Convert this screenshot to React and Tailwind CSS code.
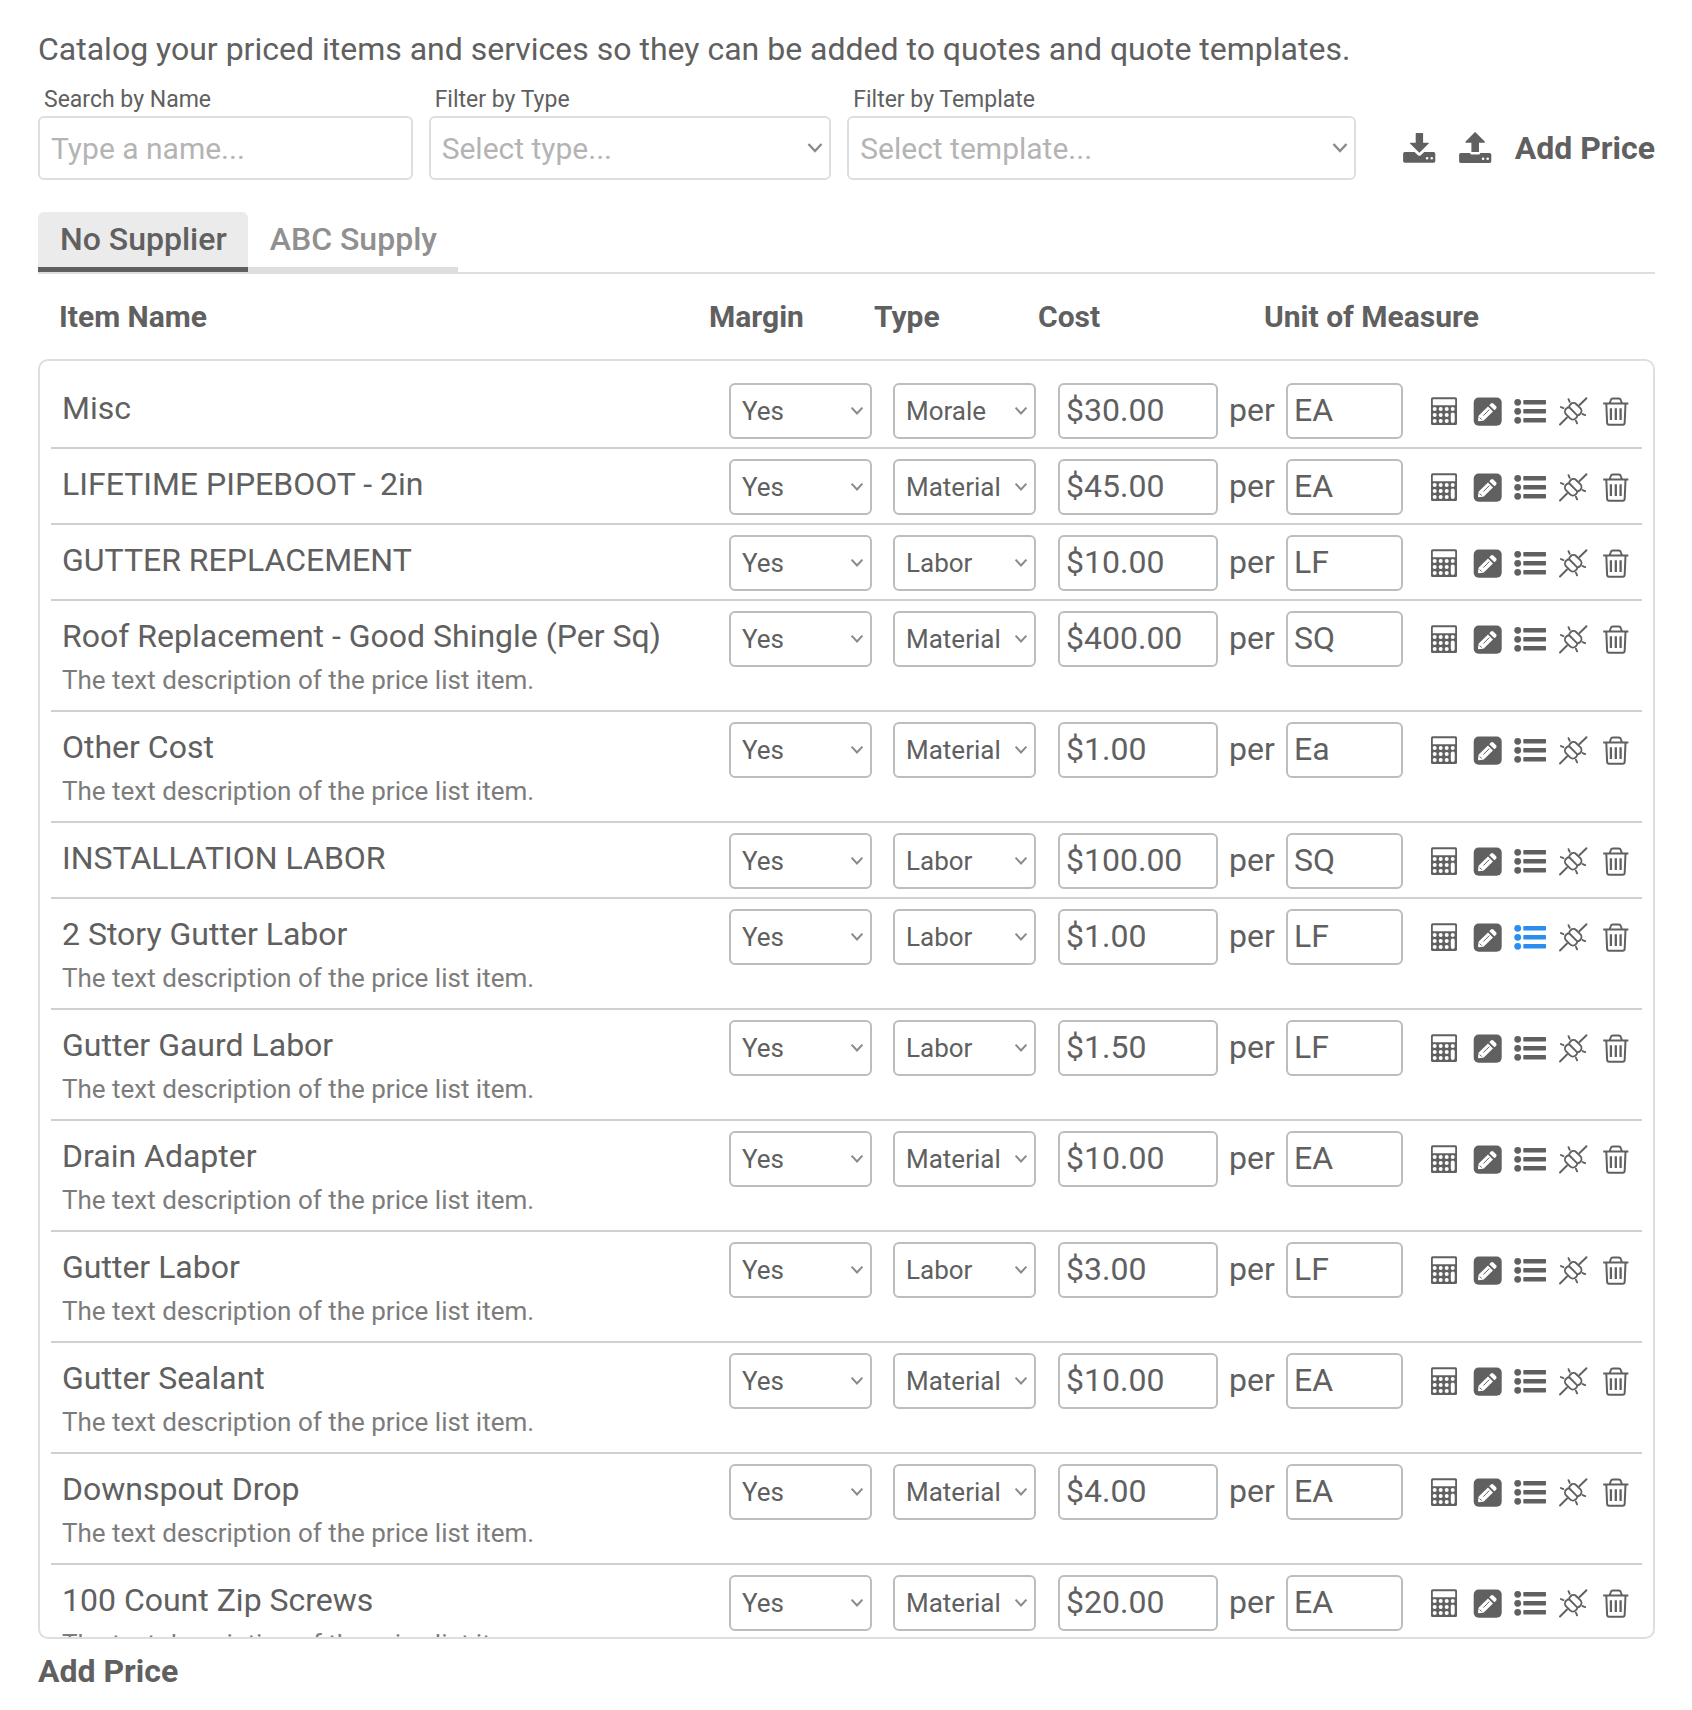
import { useState } from 'react'

const DESC = 'The text description of the price list item.'
const TYPES = ['Material', 'Labor', 'Morale']
const SUPPLIERS = ['No Supplier', 'ABC Supply']

const ITEMS = [
  { id: 1, name: 'Misc', type: 'Morale', cost: '$30.00', unit: 'EA' },
  { id: 2, name: 'LIFETIME PIPEBOOT - 2in', type: 'Material', cost: '$45.00', unit: 'EA' },
  { id: 3, name: 'GUTTER REPLACEMENT', type: 'Labor', cost: '$10.00', unit: 'LF' },
  { id: 4, name: 'Roof Replacement - Good Shingle (Per Sq)', desc: DESC, type: 'Material', cost: '$400.00', unit: 'SQ' },
  { id: 5, name: 'Other Cost', desc: DESC, type: 'Material', cost: '$1.00', unit: 'Ea' },
  { id: 6, name: 'INSTALLATION LABOR', type: 'Labor', cost: '$100.00', unit: 'SQ' },
  { id: 7, name: '2 Story Gutter Labor', desc: DESC, type: 'Labor', cost: '$1.00', unit: 'LF', inTemplate: true },
  { id: 8, name: 'Gutter Gaurd Labor', desc: DESC, type: 'Labor', cost: '$1.50', unit: 'LF' },
  { id: 9, name: 'Drain Adapter', desc: DESC, type: 'Material', cost: '$10.00', unit: 'EA' },
  { id: 10, name: 'Gutter Labor', desc: DESC, type: 'Labor', cost: '$3.00', unit: 'LF' },
  { id: 11, name: 'Gutter Sealant', desc: DESC, type: 'Material', cost: '$10.00', unit: 'EA' },
  { id: 12, name: 'Downspout Drop', desc: DESC, type: 'Material', cost: '$4.00', unit: 'EA' },
  { id: 13, name: '100 Count Zip Screws', desc: DESC, type: 'Material', cost: '$20.00', unit: 'EA' },
]

/* Icons */
const Chevron = ({ className }) => (
  <svg viewBox="0 0 16 12" fill="none" stroke="#8a8a8a" strokeWidth="2.4" className={className} aria-hidden="true">
    <path d="M1.5 2 8 9l6.500-7" />
  </svg>
)

const DownloadIcon = () => (
  <svg viewBox="0 0 33 33" className="size-[33px]" fill="currentColor" aria-hidden="true">
    <path d="M13.300 1h6.200q.6 0 .6.600v9.100h5.300q.8.100.3.800L17 20.300q-.6.600-1.200 0L7 11.500q-.5-.7.300-.8h5.400V1.600q0-.6.6-.6Z" />
    <path
      fillRule="evenodd"
      d="M1.800 20h9.700l3.500 3.200q1.400 1.100 2.800 0L21.200 20h9.400q1.700 0 1.700 1.700V29q0 1.700-1.700 1.700H1.800Q.1 30.700.1 29v-7.300Q.1 20 1.800 20Zm22.300 5a1.300 1.300 0 1 0 0 2.600 1.300 1.300 0 0 0 0-2.600Zm4.600 0a1.300 1.300 0 1 0 0 2.600 1.300 1.300 0 0 0 0-2.600Z"
    />
  </svg>
)

const UploadIcon = () => (
  <svg viewBox="0 0 33 33" className="size-[33px]" fill="currentColor" aria-hidden="true">
    <path d="M15.500.4q.6-.6 1.200 0l9 9.200q.6 1-.3 1.100h-5.400v8.800q0 .6-.6.600h-6.400q-.6 0-.6-.6v-8.800H7q-1-.1-.4-1.100Z" />
    <path
      fillRule="evenodd"
      d="M1.800 21h9.200q.3 1.600 1.900 1.600h6.500q1.600 0 1.900-1.600h9.300q1.700 0 1.700 1.700v6.600q0 1.700-1.700 1.700H1.800Q.1 31 .1 29.300v-6.600Q.1 21 1.800 21Zm22.300 4.400a1.300 1.300 0 1 0 0 2.600 1.300 1.300 0 0 0 0-2.600Zm4.600 0a1.300 1.300 0 1 0 0 2.600 1.300 1.300 0 0 0 0-2.600Z"
    />
  </svg>
)

const CalculatorIcon = () => (
  <svg viewBox="0 0 32 32" className="size-8" aria-hidden="true">
    <rect x="3" y="2.300" width="26" height="27.700" rx="1.500" fill="currentColor" />
    <rect x="4.800" y="4.300" width="22.400" height="6" rx=".6" fill="#fff" />
    <g fill="#fff">
      {[14, 20, 26].map((cy) => [6.7, 12.7, 18.7].map((cx) => <circle key={`${cx}-${cy}`} cx={cx} cy={cy} r="2" />))}
      <circle cx="24.700" cy="14" r="2" />
      <rect x="22.800" y="17.600" width="3.900" height="10.400" rx="1.900" />
    </g>
  </svg>
)

const EditIcon = () => (
  <svg viewBox="0 0 32 32" className="size-8" aria-hidden="true">
    <rect x="2.700" y="2.500" width="28" height="28.200" rx="5" fill="currentColor" />
    <path
      d="M7 25.200 7.500 21.300q.1-.6.500-1L17 11.400l5 5-9 8.900q-.4.400-1 .5l-4.200.4q-.9 0-.8-1ZM18.300 10.200l1.600-1.700q1.200-1 2.400 0l2.800 2.800q1.100 1.200 0 2.400l-1.700 1.600Z"
      fill="#fff"
    />
    <path d="m12.300 20.600 6-6M8.800 22.600l1.900 2" stroke="currentColor" strokeWidth="1" fill="none" />
  </svg>
)

const ListIcon = () => (
  <svg viewBox="0 0 32 32" className="size-8" fill="currentColor" aria-hidden="true">
    {[7.3, 16.3, 25.3].map((cy) => (
      <g key={cy}>
        <circle cx="3.700" cy={cy} r="3.400" />
        <rect x="9.300" y={cy - 2.2} width="22.700" height="4.400" rx=".7" />
      </g>
    ))}
  </svg>
)

const PlugIcon = () => (
  <svg viewBox="0 0 32 32" className="size-8" fill="none" stroke="currentColor" strokeWidth="1.900" strokeLinecap="round" aria-hidden="true">
    <path d="M3 29.500 10 22.500M22.500 10l7-6.800" />
    <g transform="rotate(-45 16.200 16.300)">
      <path d="M16.200 10.600q-1-1.100-2.600-1.100h-.6a4 4 0 0 0-4 4v5.600a4 4 0 0 0 4 4h.6q1.600 0 2.600-1.100 1 1.100 2.600 1.100h.6a4 4 0 0 0 4-4v-5.600a4 4 0 0 0-4-4h-.6q-1.600 0-2.600 1.100Zm0 0v11.400" />
    </g>
    <path d="m11.500 4.200 1.200 2.600M3.800 12l2.600 1.100M25.600 19.100l2.600 1M18.900 25.700l1.200 2.600" />
  </svg>
)

const TrashIcon = () => (
  <svg viewBox="0 0 32 32" className="size-8" fill="none" stroke="currentColor" strokeWidth="2" aria-hidden="true">
    <path d="M3.200 8.500h25.200M9.700 8.200l1-3q.5-1.700 2.200-1.700h5.800q1.700 0 2.200 1.700l1 3" />
    <path d="m6.300 8.500.8 19.300q.1 2 2 2h13.600q1.900 0 2-2l.8-19.300" />
    <path d="M10.900 13.300V25M15.800 13.300V25M20.600 13.300V25" strokeWidth="2.300" />
  </svg>
)

/* Labelled drop-down in the filter bar */
function FilterSelect({ id, label, placeholder, options, value, onChange }) {
  return (
    <div className="flex flex-col">
      <label htmlFor={id} className="pl-1.5 mb-0.5 text-[23px] leading-7">{label}</label>
      <div className="relative">
        <select
          id={id}
          value={value}
          onChange={(e) => onChange(e.target.value)}
          className={`w-full h-16 appearance-none rounded-md border-2 border-[#dedede] bg-white pl-[11px] pr-10 text-[30px] outline-none ${
            value ? 'text-[#606060]' : 'text-[#b4b4b4]'
          }`}
        >
          <option value="">{placeholder}</option>
          {options.map((o) => (
            <option key={o} value={o}>{o}</option>
          ))}
        </select>
        <Chevron className="pointer-events-none absolute right-2 top-[26px] h-3 w-4" />
      </div>
    </div>
  )
}

function RowSelect({ label, options, value, onChange }) {
  return (
    <div className="relative w-[143px]">
      <select
        aria-label={label}
        value={value}
        onChange={(e) => onChange(e.target.value)}
        className="w-full h-14 appearance-none rounded-md border-2 border-[#bdbdbd] bg-white pl-[11px] text-[26px] outline-none"
      >
        {options.map((o) => (
          <option key={o}>{o}</option>
        ))}
      </select>
      <Chevron className="pointer-events-none absolute right-2 top-[23px] h-[10px] w-[14px]" />
    </div>
  )
}

function ItemRow({ item, onChange }) {
  const set = (field) => (value) => onChange(item.id, field, value)

  return (
    <tr className="grid grid-cols-[1fr_164px_165px_228px_142px_214px] border-b-2 border-[#d0d0d0] pt-[10px] pb-2">
      <td className="pt-[5px] pl-[11px]">
        <p className="text-[32px] leading-10">{item.name}</p>
        {item.desc && <p className="mt-2 mb-1.5 text-[26px] leading-8 text-[#7c7c7c]">{item.desc}</p>}
      </td>
      <td>
        <RowSelect label={`Margin for ${item.name}`} options={['Yes', 'No']} value={item.margin} onChange={set('margin')} />
      </td>
      <td>
        <RowSelect label={`Type of ${item.name}`} options={TYPES} value={item.type} onChange={set('type')} />
      </td>
      <td className="flex items-start">
        <input
          type="text"
          aria-label={`Cost of ${item.name}`}
          value={item.cost}
          onChange={(e) => set('cost')(e.target.value)}
          className="h-14 w-40 rounded-md border-2 border-[#bdbdbd] px-1.5 pb-0.5 text-[32px] outline-none"
        />
        <span className="flex-1 text-center text-[32px] leading-[54px]">per</span>
      </td>
      <td>
        <input
          type="text"
          aria-label={`Unit of measure for ${item.name}`}
          value={item.unit}
          onChange={(e) => set('unit')(e.target.value)}
          className="h-14 w-[117px] rounded-md border-2 border-[#bdbdbd] px-1.5 pb-0.5 text-[32px] outline-none"
        />
      </td>
      <td className="flex h-14 items-center gap-[11px]">
        <button type="button" aria-label="Calculate"><CalculatorIcon /></button>
        <button type="button" aria-label="Edit"><EditIcon /></button>
        <button type="button" aria-label="Templates" className={item.inTemplate ? 'text-[#2b8eec]' : ''}><ListIcon /></button>
        <button type="button" aria-label="Integrations"><PlugIcon /></button>
        <button type="button" aria-label="Delete"><TrashIcon /></button>
      </td>
    </tr>
  )
}

export default function App() {
  const [items, setItems] = useState(ITEMS.map((item) => ({ margin: 'Yes', ...item })))
  const [search, setSearch] = useState('')
  const [typeFilter, setTypeFilter] = useState('')
  const [template, setTemplate] = useState('')
  const [supplier, setSupplier] = useState('No Supplier')

  const filteredItems = items.filter((item) => {
    const matchesSearch = item.name.toLowerCase().includes(search.toLowerCase())
    const matchesType = !typeFilter || item.type === typeFilter
    return matchesSearch && matchesType
  })

  const handleChange = (id, field, value) => {
    setItems((prev) => prev.map((item) => (item.id === id ? { ...item, [field]: value } : item)))
  }

  return (
    <div className="flex h-screen flex-col bg-white pl-[38px] pr-[37px] pt-[29px] pb-[19px] font-['Roboto',sans-serif] text-[#606060]">
      <p className="text-[32px] leading-10">
        Catalog your priced items and services so they can be added to quotes and quote templates.
      </p>

      {/* Filters */}
      <div className="mt-[17px] grid grid-cols-[375fr_403fr_509fr_auto] items-end gap-4">
        <div className="flex flex-col">
          <label htmlFor="search" className="pl-1.5 mb-0.5 text-[23px] leading-7">Search by Name</label>
          <input
            id="search"
            type="text"
            placeholder="Type a name..."
            value={search}
            onChange={(e) => setSearch(e.target.value)}
            className="h-16 w-full rounded-md border-2 border-[#dedede] px-[11px] text-[30px] placeholder-[#b4b4b4] outline-none"
          />
        </div>
        <FilterSelect
          id="type"
          label="Filter by Type"
          placeholder="Select type..."
          options={TYPES}
          value={typeFilter}
          onChange={setTypeFilter}
        />
        <FilterSelect
          id="template"
          label="Filter by Template"
          placeholder="Select template..."
          options={['Roof', 'Gutters']}
          value={template}
          onChange={setTemplate}
        />
        <div className="flex h-16 items-center gap-[23px] pl-[31px]">
          <button type="button" aria-label="Download prices"><DownloadIcon /></button>
          <button type="button" aria-label="Upload prices"><UploadIcon /></button>
          <button type="button" className="text-[32px] leading-10 font-bold">Add Price</button>
        </div>
      </div>

      {/* Supplier tabs */}
      <div role="tablist" className="mt-8 flex border-b-2 border-[#dedede]">
        {SUPPLIERS.map((name) => (
          <button
            key={name}
            type="button"
            role="tab"
            aria-selected={supplier === name}
            onClick={() => setSupplier(name)}
            className={`border-b-[5px] pl-[22px] pr-[21px] pt-[7px] pb-2 text-[32px] leading-10 font-medium ${
              supplier === name
                ? 'rounded-t-md border-[#606060] bg-[#ebebeb]'
                : 'border-[#dedede] text-[#909090]'
            }`}
          >
            {name}
          </button>
        ))}
      </div>

      {/* Price list */}
      <table className="flex min-h-0 flex-1 flex-col">
        <thead className="block">
          <tr className="grid grid-cols-[1fr_165px_164px_226px_391px] pt-[23px] pb-[22px] text-left text-[30px] leading-10">
            <th className="pl-[21px]">Item Name</th>
            <th>Margin</th>
            <th>Type</th>
            <th>Cost</th>
            <th>Unit of Measure</th>
          </tr>
        </thead>
        <tbody className="block min-h-0 flex-1 overflow-y-auto rounded-[10px] border-2 border-[#dedede] px-[11px] pt-3 [scrollbar-width:none]">
          {filteredItems.map((item) => (
            <ItemRow key={item.id} item={item} onChange={handleChange} />
          ))}
        </tbody>
      </table>

      <button type="button" className="mt-3 self-start text-[32px] leading-10 font-bold">Add Price</button>
    </div>
  )
}
